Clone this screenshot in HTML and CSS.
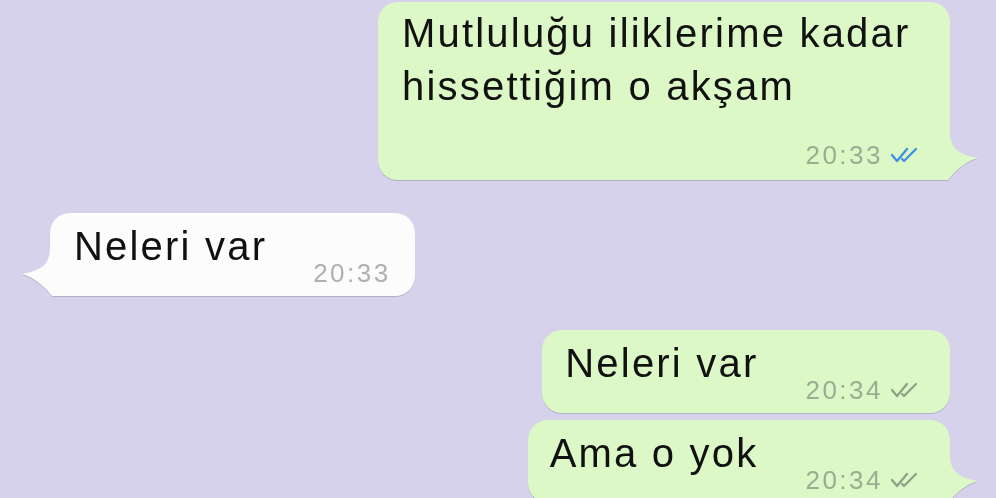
FILE: index.html
```html
<!DOCTYPE html>
<html>
<head>
	<title>Sohbet</title>
	<meta charset="utf-8">
	<link rel="stylesheet" href="styles.css">
</head>
<body>
<div class="chat">
	<div class="bubble out first">
		<p class="text">Mutluluğu iliklerime kadar hissettiğim o akşam</p>
		<div class="meta"><span>20:33</span><svg class="ticks read" viewBox="0 0 30 18" width="30" height="18"><polyline points="2,9 7,15 17,3"/><polyline points="12,13 14,15 26,3"/></svg></div>
		<svg class="tail" viewBox="0 0 40 60" width="40" height="60"><path d="M0 10 H10 C10 26 15 34 38 38 C26 41 16 50 8 60 H0 Z"/></svg>
	</div>

	<div class="bubble in row">
		<p class="text">Neleri var</p>
		<div class="meta"><span>20:33</span></div>
		<svg class="tail" viewBox="0 0 40 60" width="40" height="60"><path d="M0 10 H10 C10 26 15 34 38 38 C26 41 16 50 8 60 H0 Z"/></svg>
	</div>

	<div class="bubble out row">
		<p class="text">Neleri var</p>
		<div class="meta"><span>20:34</span><svg class="ticks" viewBox="0 0 30 18" width="30" height="18"><polyline points="2,9 7,15 17,3"/><polyline points="12,13 14,15 26,3"/></svg></div>
	</div>

	<div class="bubble out row last">
		<p class="text">Ama o yok</p>
		<div class="meta"><span>20:34</span><svg class="ticks" viewBox="0 0 30 18" width="30" height="18"><polyline points="2,9 7,15 17,3"/><polyline points="12,13 14,15 26,3"/></svg></div>
		<svg class="tail" viewBox="0 0 40 60" width="40" height="60"><path d="M0 10 H10 C10 26 15 34 38 38 C26 41 16 50 8 60 H0 Z"/></svg>
	</div>
</div>
</body>
</html>
```

FILE: styles.css
```css
body,div,p{margin:0;padding:0;}
body{background:#d6d2ec;font-family:"Liberation Sans",Arial,sans-serif;color:#111;overflow:hidden;}

.chat{display:flex;flex-direction:column;padding:2px 46px 0 50px;}

.bubble{position:relative;border-radius:20px;filter:drop-shadow(0 1.5px 0.6px rgba(0,0,0,0.16));}
.bubble.out{align-self:flex-end;background:#dcf8c6;}
.bubble.in{align-self:flex-start;background:#fcfcfc;margin-top:33px;}

.text{font-size:40px;line-height:53px;letter-spacing:2.2px;}

.meta{display:flex;align-items:center;justify-content:flex-end;font-size:26px;line-height:30px;letter-spacing:2.5px;color:#9bad91;}
.in .meta{color:#b0b0b0;}
.meta .ticks{margin-left:7px;fill:none;stroke:#8fa287;stroke-width:2.3;stroke-linecap:round;stroke-linejoin:round;}
.meta .ticks.read{stroke:#3f8fe3;}

/* first long message */
.first{width:572px;box-sizing:border-box;padding:5px 30px 10px 24px;border-bottom-right-radius:10px;}
.first .meta{margin-top:27px;}

/* one-line messages: text left, time at the bottom right */
.row{display:flex;align-items:flex-end;gap:47px;padding:7px 30px 8px 23px;}
.row .text{margin-bottom:15px;}
.bubble.in.row{padding:7px 24px 8px 24px;gap:46px;border-bottom-left-radius:10px;}
.bubble.out.row{margin-top:34px;}
.bubble.out.row.last{margin-top:7px;padding-left:22px;border-bottom-right-radius:10px;}

.tail{position:absolute;bottom:0;right:-30px;}
.out .tail{fill:#dcf8c6;}
.in .tail{fill:#fcfcfc;right:auto;left:-30px;transform:scaleX(-1);}
```
